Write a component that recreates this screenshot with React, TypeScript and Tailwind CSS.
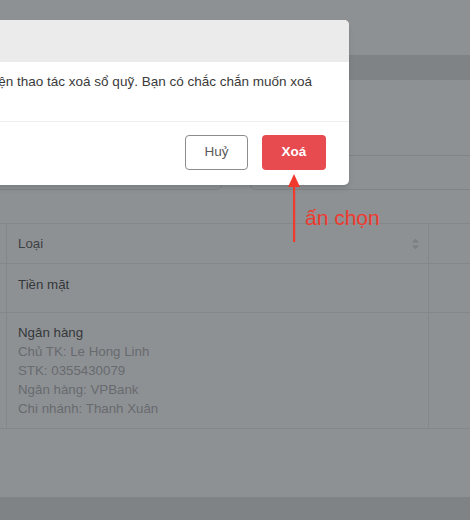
import React from "react";

export default function App() {
  const font = { fontFamily: '"Liberation Sans", Arial, sans-serif' };
  return (
    <div className="relative w-[470px] h-[520px] overflow-hidden bg-[#8e9194]" style={font}>
      <div className="flex flex-col h-full">
        <div className="h-[55px] bg-[#8e9194]" />
        <div className="h-[25px] bg-[#7f8386]" />
        <div className="flex-1 flex flex-col bg-[#8e9194]">
          {/* inputs */}
          <div className="flex gap-[28px] mt-[75px] -ml-[12px] -mr-[20px]">
            <div className="w-[234px] h-[35px] border border-[#818487] rounded-[5px]" />
            <div className="flex-1 h-[35px] border border-[#818487] rounded-[5px]" />
          </div>
          {/* table */}
          <div className="mt-[33px] border-t border-[#84878a]">
            <div className="flex h-[40px] border-b border-[#84878a]">
              <div className="w-[7px] border-r border-[#84878a]" />
              <div className="w-[422px] border-r border-[#84878a] flex items-center justify-between pl-[11px] pr-[8px]">
                <span className="text-[13.3px] text-[#3e4144]">Loại</span>
                <svg width="9" height="12" viewBox="0 0 9 12">
                  <path d="M4.5 0.5 L8 4.5 L1 4.5 Z" fill="#7c7f82" />
                  <path d="M4.5 11.5 L8 7.5 L1 7.5 Z" fill="#7c7f82" />
                </svg>
              </div>
              <div className="flex-1" />
            </div>
            <div className="flex h-[49px] border-b border-[#84878a]">
              <div className="w-[7px] border-r border-[#84878a]" />
              <div className="w-[422px] border-r border-[#84878a] pl-[11px] pt-[11px]">
                <div className="text-[13.3px] leading-[19px] text-[#34373a]">Tiền mặt</div>
              </div>
              <div className="flex-1" />
            </div>
            <div className="flex h-[116px] border-b border-[#84878a]">
              <div className="w-[7px] border-r border-[#84878a]" />
              <div className="w-[422px] border-r border-[#84878a] pl-[11px] pt-[10px] text-[13.3px] leading-[19px]">
                <div className="text-[#34373a]">Ngân hàng</div>
                <div className="text-[#676a6e]">Chủ TK: Le Hong Linh</div>
                <div className="text-[#676a6e]">STK: 0355430079</div>
                <div className="text-[#676a6e]">Ngân hàng: VPBank</div>
                <div className="text-[#676a6e]">Chi nhánh: Thanh Xuân</div>
              </div>
              <div className="flex-1" />
            </div>
          </div>
          <div className="flex-1" />
        </div>
        <div className="h-[23px] bg-[#7f8386]" />
      </div>

      {/* modal */}
      <div className="absolute left-[-200px] top-[20px] w-[549px] h-[165px] bg-white rounded-[5px] overflow-hidden flex flex-col shadow-md">
        <div className="h-[42px] bg-[#ebebeb]" />
        <div className="h-[59px] flex justify-end pr-[37px] pt-[11px]">
          <span className="whitespace-nowrap text-[13.5px] leading-[18px] text-[#3a3a3a]">
            Bạn đang thực hiện thao tác xoá sổ quỹ. Bạn có chắc chắn muốn xoá
          </span>
        </div>
        <div className="flex-1 border-t border-[#efefef] flex justify-end items-start gap-[14px] pt-[13px] pr-[23px]">
          <button className="w-[63px] h-[35px] border border-[#8c8c8c] rounded-[4px] text-[13.5px] text-[#595959] bg-white">
            Huỷ
          </button>
          <button className="w-[64px] h-[35px] rounded-[4px] text-[13.5px] font-bold text-white bg-[#e84b4f]">
            Xoá
          </button>
        </div>
      </div>

      {/* annotation arrow */}
      <svg className="absolute left-[286px] top-[174px]" width="16" height="70" viewBox="0 0 16 70">
        <path d="M8 0 L14 13 L2 13 Z" fill="#f2392e" />
        <rect x="7" y="12" width="2.2" height="56" fill="#f2392e" />
      </svg>
      <div className="absolute left-[305px] top-[205px] text-[21px] leading-[25px] text-[#f0392e]">
        ấn chọn
      </div>
    </div>
  );
}
